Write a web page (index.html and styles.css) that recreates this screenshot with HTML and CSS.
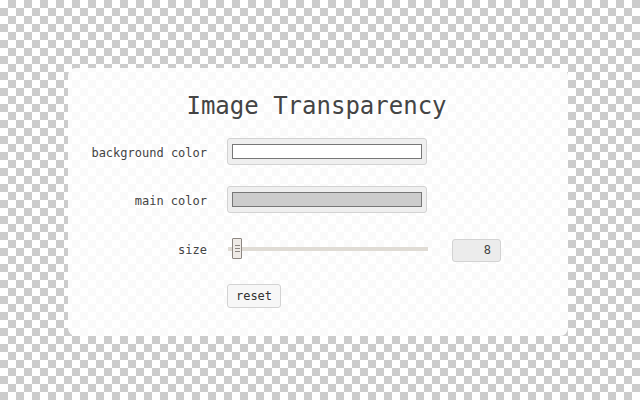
FILE: index.html
```html
<!DOCTYPE html>
<html>
<head>
<meta charset="utf-8">
<title>Image Transparency</title>
<link rel="stylesheet" href="styles.css">
</head>
<body>
<div class="panel">
  <h1 class="title">Image Transparency</h1>
  <div class="form">
    <label class="label">background color</label>
    <div class="colorbox"><span class="swatch swatch-white"></span></div>

    <label class="label">main color</label>
    <div class="colorbox"><span class="swatch swatch-grey"></span></div>

    <label class="label">size</label>
    <div class="size-row">
      <div class="slider">
        <div class="track"></div>
        <div class="thumb"><i></i><i></i><i></i></div>
      </div>
      <div class="number">8</div>
    </div>

    <span class="label"></span>
    <div class="button-row"><button class="reset">reset</button></div>
  </div>
</div>
</body>
</html>
```

FILE: styles.css
```css
html, body {
  margin: 0;
  height: 100%;
}
body {
  background-color: #fff;
  background-image: repeating-conic-gradient(#ccc 0 25%, #fff 0 50%);
  background-size: 16px 16px;
  background-position: 0 0;
  font-family: "DejaVu Sans Mono", monospace;
  color: #444;
  overflow: hidden;
}
.panel {
  margin: 0;
  position: relative;
  top: 68px;
  left: 68px;
  width: 500px;
  box-sizing: border-box;
  padding: 24px 0 28px;
  background: rgba(255, 255, 255, 0.9);
  border-radius: 8px;
}
.title {
  margin: 0 0 18px;
  font-size: 24px;
  line-height: 28px;
  font-weight: normal;
  text-align: center;
  color: #444;
  padding-right: 3px;
}
.form {
  display: grid;
  grid-template-columns: 139px 1fr;
  grid-template-rows: 27px 27px 29px 24px;
  column-gap: 20px;
  row-gap: 21px;
  align-items: center;
}
.label {
  font-size: 12px;
  line-height: 16px;
  padding-top: 3px;
  text-align: right;
  color: #444;
}
.colorbox {
  width: 200px;
  height: 27px;
  box-sizing: border-box;
  border: 1px solid #d3d3d3;
  border-radius: 3px;
  background: #efefef;
  padding: 5px 4px;
  display: flex;
}
.swatch {
  flex: 1;
  border: 1px solid #777;
}
.swatch-white { background: #fff; }
.swatch-grey { background: #ccc; }
.size-row {
  display: flex;
  align-items: center;
  height: 29px;
}
.slider {
  position: relative;
  width: 200px;
  height: 21px;
  margin-left: 1px;
  display: flex;
  align-items: center;
}
.track {
  width: 100%;
  height: 4px;
  background: #e0dcd5;
}
.thumb {
  position: absolute;
  left: 4px;
  top: 0;
  width: 10px;
  height: 21px;
  box-sizing: border-box;
  border: 1px solid #8d8782;
  border-radius: 1px;
  background: #efebe7;
  display: flex;
  flex-direction: column;
  align-items: center;
  justify-content: center;
  gap: 2px;
}
.thumb i {
  display: block;
  width: 5px;
  height: 1px;
  background: #8d8782;
}
.number {
  margin-left: 24px;
  align-self: flex-end;
  margin-bottom: 1px;
  width: 49px;
  height: 23px;
  box-sizing: border-box;
  border: 1px solid #d3d3d3;
  border-radius: 3px;
  background: #ececec;
  font-size: 12px;
  line-height: 21px;
  text-align: right;
  padding-right: 9px;
  color: #444;
}
.button-row {
  display: flex;
}
.reset {
  width: 54px;
  height: 24px;
  box-sizing: border-box;
  border: 1px solid #d3d3d3;
  border-radius: 3px;
  background: #f7f7f7;
  font-family: "DejaVu Sans Mono", monospace;
  font-size: 12px;
  color: #333;
  padding: 0 0 1px;
  margin: 0;
}
```
